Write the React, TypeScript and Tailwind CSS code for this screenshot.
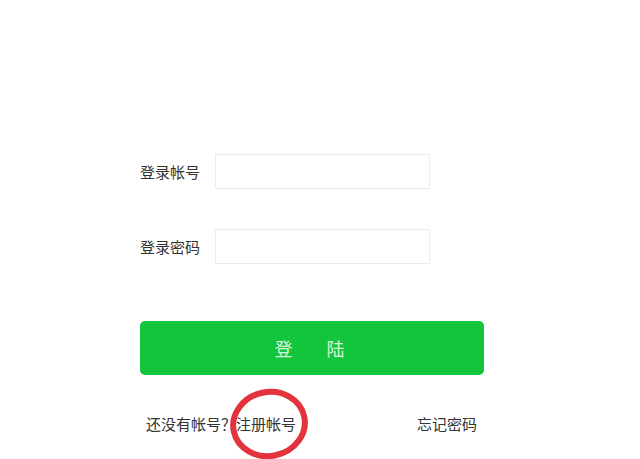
import React from "react";

const App = () => {
  return (
    <div
      className="w-[640px] h-[459px] bg-white overflow-hidden text-[#333]"
      style={{ fontFamily: '"Noto Sans CJK SC", "Noto Sans", sans-serif' }}
    >
      <div className="pl-[140px] pt-[154px] w-[484px]">
        <div className="flex items-center h-[35px]">
          <span className="w-[75px] text-[15px] leading-none">登录帐号</span>
          <input className="w-[215px] h-[35px] border border-[#ececec] bg-white outline-none" />
        </div>
        <div className="flex items-center h-[35px] mt-[40px]">
          <span className="w-[75px] text-[15px] leading-none">登录密码</span>
          <input
            type="password"
            className="w-[215px] h-[35px] border border-[#ececec] bg-white outline-none"
          />
        </div>
        <button className="mt-[57px] w-[344px] h-[54px] rounded-[5px] bg-[#12c53d] text-[#d9f6dd] text-[18px] flex items-center justify-center gap-[34px] pr-[5px]">
          <span>登</span>
          <span>陆</span>
        </button>
        <div className="relative flex justify-between items-center px-[6px] mt-[38px] h-[20px] text-[15px] leading-none">
          <span className="whitespace-nowrap">
            还没有帐号<span className="inline-block w-[15px] text-center">？</span>注册帐号
          </span>
          <span className="pr-[1px]">忘记密码</span>
          <svg
            className="absolute left-[88px] top-[-26px]"
            width="82"
            height="74"
            viewBox="0 0 82 74"
          >
            <ellipse
              cx="41"
              cy="37"
              rx="36"
              ry="32"
              fill="none"
              stroke="#e3333c"
              strokeWidth="6"
              transform="rotate(-12 41 37)"
            />
          </svg>
        </div>
      </div>
    </div>
  );
};

export default App;
